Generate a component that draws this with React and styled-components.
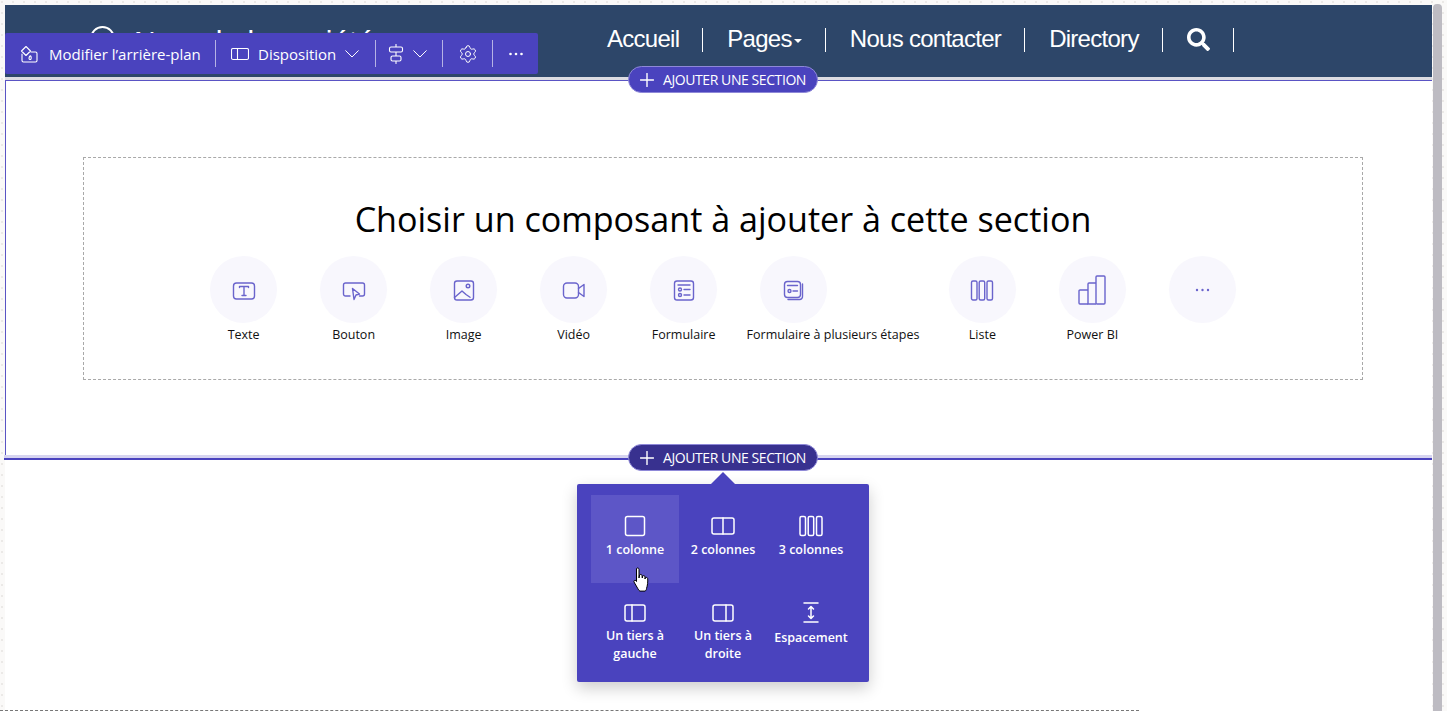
import React from 'react';
import styled, { createGlobalStyle } from 'styled-components';
import { FaSearch } from 'react-icons/fa';
import { Settings } from 'lucide-react';

const UI_FONT = '"Open Sans", "Noto Sans", "Liberation Sans", sans-serif';

const GlobalStyle = createGlobalStyle`
  html, body { margin: 0; padding: 0; height: 711px; overflow: hidden; background: #faf9f8; }
  * { box-sizing: border-box; }
`;

const Page = styled.div`
  display: flex;
  height: 711px;
  padding: 5px 0 0 5px;
  font-family: ${UI_FONT};
  background-color: #faf9f8;
  background-image: radial-gradient(circle at 2px 2px, #ebe9e7 1px, transparent 1.5px);
  background-size: 11px 11px;
`;

const Frame = styled.div`
  position: relative;
  width: 1427px;
  display: flex;
  flex-direction: column;
  background: #fff;
`;

const Scrollbar = styled.div`
  width: 9px;
  margin: -1px 0 0 1px;
  background: #bdbbc2;
  border-radius: 4px 4px 0 0;
`;

/* site header */
const Header = styled.header`
  height: 72px;
  background: #2d4669;
  display: flex;
  align-items: flex-start;
  padding-left: 85px;
  overflow: hidden;
`;

const Logo = styled.div`
  width: 517px;
  display: flex;
  align-items: flex-start;
  gap: 19px;
  padding-top: 20px;
  color: #fff;
  font: 30px "Liberation Sans", Arial, sans-serif;
  line-height: 34px;
  white-space: nowrap;
`;

const LogoMark = styled.span`
  flex: none;
  width: 25px;
  height: 25px;
  margin-top: 1px;
  border: 2px solid #fff;
  border-radius: 50%;
`;

const Nav = styled.nav`
  display: flex;
  align-items: center;
  height: 24px;
  margin-top: 23px;
`;

const NavItem = styled.a`
  display: flex;
  align-items: center;
  height: 24px;
  padding: 0 23px 2px 24px;
  border-right: 1px solid #fff;
  color: #fff;
  font: 24px "Liberation Sans", Arial, sans-serif;
  letter-spacing: -0.72px;
  white-space: nowrap;
  &:first-child { padding-left: 0; }
`;

const Caret = styled.span`
  width: 0;
  height: 0;
  margin: 3px 0 0 2px;
  border: 4px solid transparent;
  border-top-color: #fff;
  border-bottom: 0;
`;

/* section editing bar */
const Toolbar = styled.div`
  position: absolute;
  left: 0;
  top: 28px;
  width: 533px;
  height: 41px;
  display: flex;
  align-items: center;
  background: #4a43be;
  color: #fff;
  border-radius: 2px;
  font-size: 15px;
`;

const ToolGroup = styled.div`
  display: flex;
  align-items: center;
  height: 27px;
  width: ${p => p.$w}px;
  padding-left: ${p => p.$pl}px;
  gap: ${p => p.$gap || 0}px;
  border-right: ${p => (p.$last ? '0' : '1px solid rgba(255,255,255,.6)')};
  white-space: nowrap;
`;

const Line = styled.div`
  flex: none;
  height: ${p => p.$h}px;
  margin-left: ${p => p.$ml || 0}px;
  background: ${p => p.$bg};
`;

const Pill = styled.button`
  position: absolute;
  left: 623px;
  top: ${p => p.$top}px;
  width: 190px;
  height: 27px;
  display: flex;
  align-items: center;
  justify-content: center;
  gap: 9px;
  padding: 0;
  border: 1px solid #8e88d8;
  border-radius: 14px;
  background: ${p => (p.$active ? '#38318f' : '#4a43be')};
  color: #fff;
  font-family: ${UI_FONT};
  font-size: 14px;
  letter-spacing: -0.42px;
  z-index: 3;
`;

const Section = styled.section`
  flex: none;
  height: 374px;
  padding: 76px 69px 75px 77px;
  border-left: 1px solid #5a54c4;
`;

const Placeholder = styled.div`
  height: 223px;
  border: 1px dashed #a9a9a9;
  display: flex;
  flex-direction: column;
  align-items: center;
  padding-top: 38px;
`;

const Title = styled.h2`
  margin: 0;
  height: 46px;
  color: #000;
  font-size: 34.1px;
  line-height: 46px;
  font-weight: 400;
  white-space: nowrap;
`;

const Components = styled.div`
  display: flex;
  justify-content: center;
  margin-top: 14px;
`;

const Component = styled.div`
  min-width: 110px;
  padding: 0 8px;
  display: flex;
  flex-direction: column;
  align-items: flex-start;
`;

const CircleSlot = styled.div`
  width: 94px;
  display: flex;
  justify-content: center;
`;

const Circle = styled.div`
  width: 67px;
  height: 67px;
  border-radius: 50%;
  background: #f8f7fd;
  display: flex;
  align-items: center;
  justify-content: center;
  color: #6a64cc;
`;

const CompLabel = styled.div`
  min-width: 94px;
  margin-top: 3px;
  text-align: center;
  font-size: 12.5px;
  line-height: 18px;
  color: #111;
  white-space: nowrap;
`;

/* section layout popup */
const Popover = styled.div`
  position: absolute;
  left: 572px;
  top: 479px;
  width: 292px;
  height: 198px;
  padding: 11px 14px;
  display: grid;
  grid-template-columns: repeat(3, 88px);
  grid-template-rows: repeat(2, 88px);
  background: #4a43be;
  border-radius: 2px;
  box-shadow: 0 6px 16px rgba(0,0,0,.2);
  z-index: 2;
  &::before {
    content: '';
    position: absolute;
    left: 134px;
    top: -12px;
    border: 12px solid transparent;
    border-top: 0;
    border-bottom-color: #4a43be;
  }
`;

const LayoutOption = styled.div`
  display: flex;
  flex-direction: column;
  align-items: center;
  padding-top: ${p => p.$pt}px;
  background: ${p => (p.$hover ? '#5d56c7' : 'transparent')};
  color: #fff;
  font-size: 12.5px;
  font-weight: 600;
  line-height: 18px;
  text-align: center;
`;

const OptionLabel = styled.div`
  margin-top: ${p => p.$mt}px;
  white-space: pre-line;
`;

const Cursor = styled.svg`
  position: absolute;
  left: 628px;
  top: 562px;
  z-index: 4;
`;

const BottomEdge = styled.div`
  position: absolute;
  left: -5px;
  top: 705px;
  width: 1139px;
  border-top: 1px dashed #777;
`;

const Ic = ({ w = 24, h = 24, sw = 1.6, children }) => (
  <svg width={w} height={h} viewBox={`0 0 ${w} ${h}`} fill="none" stroke="currentColor" strokeWidth={sw} strokeLinecap="round" strokeLinejoin="round">
    {children}
  </svg>
);

const Chevron = () => (
  <Ic w={14} h={8} sw={1}><path d="M.7.7 7 7l6.300-6.300" /></Ic>
);

const PlusIc = () => (
  <Ic w={14} h={14} sw={1.4}><path d="M7 .5v13M.5 7h13" /></Ic>
);

const Bucket = () => (
  <Ic w={18} h={18} sw={1.1}>
    <path d="M6 1.5 10.500 6 6 10.500 1.500 6Z" />
    <path d="M11 7h4.500a1.500 1.500 0 0 1 1.500 1.500v7a1.500 1.500 0 0 1-1.500 1.500h-12A1.500 1.500 0 0 1 2 15.500V9" />
    <path d="M10 11c1-1 1.500 2 1 3s-2 .5-2-.5 .5-2 1-2.500Z" />
  </Ic>
);

const LayoutIc = () => (
  <Ic w={18} h={14} sw={1.1}><rect x=".5" y="1.5" width="17" height="11" rx="1.5" /><path d="M6.500 1.500v11" /></Ic>
);

const AlignIc = () => (
  <Ic w={16} h={20} sw={1.1}>
    <path d="M8 .5v19" />
    <rect x="1.5" y="3" width="13" height="5" rx="1.5" fill="#4a43be" />
    <rect x="3" y="12" width="10" height="5" rx="1.5" fill="#4a43be" />
  </Ic>
);

const Dots = ({ w = 16, r = 1.3 }) => (
  <svg width={w} height="4" viewBox={`0 0 ${w} 4`} fill="currentColor">
    <circle cx={w / 2 - 5.5} cy="2" r={r} /><circle cx={w / 2} cy="2" r={r} /><circle cx={w / 2 + 5.5} cy="2" r={r} />
  </svg>
);

const compIcons = {
  text: (
    <Ic sw={1.4}>
      <rect x="1.500" y="5" width="21" height="16" rx="3" />
      <path d="M7.500 9.500v-1h9v1M12 8.500v9M10 17.500h4" />
    </Ic>
  ),
  button: (
    <Ic sw={1.4}>
      <path d="M8 18H3.500A2 2 0 0 1 1.500 16V7a2 2 0 0 1 2-2h17a2 2 0 0 1 2 2v9a2 2 0 0 1-2 2h-3" />
      <path d="M10.500 10.500 17.500 16l-3.500 1-2 4.500Z" />
    </Ic>
  ),
  image: (
    <Ic sw={1.4}>
      <rect x="2.500" y="3" width="19" height="19" rx="2.500" />
      <circle cx="16" cy="8" r="1.800" />
      <path d="M2.500 19.500 10 13l4 3.500 4 2.800" />
    </Ic>
  ),
  video: (
    <Ic sw={1.4}>
      <rect x="1.500" y="5" width="15" height="15" rx="3.500" />
      <path d="M16.500 10.500 22 6.500v12l-5.500-4" />
    </Ic>
  ),
  form: (
    <Ic sw={1.4}>
      <rect x="2.500" y="3" width="19" height="19" rx="2.500" />
      <path d="M6 7h12M12 11.500h6M12 17h6" />
      <circle cx="8" cy="11.500" r="1.500" /><circle cx="8" cy="17" r="1.500" />
    </Ic>
  ),
  multi: (
    <Ic sw={1.4}>
      <rect x="2.500" y="3.500" width="16" height="16" rx="3" />
      <path d="M5.500 7.500h10M11 13h4.500" />
      <circle cx="7.500" cy="13" r="1.500" />
      <path d="M20.500 6v12a3 3 0 0 1-3 3.500H6" />
    </Ic>
  ),
  list: (
    <Ic sw={1.4}>
      <rect x="1.500" y="3" width="5.500" height="19" rx="1.500" />
      <rect x="9.200" y="3" width="5.500" height="19" rx="1.500" />
      <rect x="17" y="3" width="5.500" height="19" rx="1.500" />
    </Ic>
  ),
  powerbi: (
    <svg width="28" height="30" viewBox="0 0 28 30" fill="none" stroke="currentColor" strokeWidth="1.4" strokeLinejoin="round">
      <rect x="18" y="1" width="9" height="28" rx="1" />
      <path d="M18 8h-7a1 1 0 0 0-1 1v20h8" />
      <path d="M10 15H2a1 1 0 0 0-1 1v12a1 1 0 0 0 1 1h8" />
    </svg>
  ),
  more: <Dots w={15} r={1.2} />,
};

const components = [
  ['Texte', 'text'],
  ['Bouton', 'button'],
  ['Image', 'image'],
  ['Vidéo', 'video'],
  ['Formulaire', 'form'],
  ['Formulaire à plusieurs étapes', 'multi'],
  ['Liste', 'list'],
  ['Power BI', 'powerbi'],
  ['', 'more'],
];

const layouts = [
  {
    label: '1 colonne', pt: 20, mt: 4, hover: true,
    icon: <Ic w={22} h={22} sw={1.5}><rect x="1.500" y="1.500" width="19" height="19" rx="2" /></Ic>,
  },
  {
    label: '2 colonnes', pt: 20, mt: 4,
    icon: <Ic w={24} h={22} sw={1.5}><rect x="1" y="3" width="22" height="16" rx="2" /><path d="M12 3v16" /></Ic>,
  },
  {
    label: '3 colonnes', pt: 20, mt: 4,
    icon: <Ic w={24} h={22} sw={1.5}><rect x="1" y="1.500" width="5.500" height="19" rx="1.500" /><rect x="9.200" y="1.500" width="5.500" height="19" rx="1.500" /><rect x="17.500" y="1.500" width="5.500" height="19" rx="1.500" /></Ic>,
  },
  {
    label: 'Un tiers à\ngauche', pt: 20, mt: 4,
    icon: <Ic w={22} h={20} sw={1.5}><rect x="1" y="2" width="20" height="16" rx="2" /><path d="M8 2v16" /></Ic>,
  },
  {
    label: 'Un tiers à\ndroite', pt: 20, mt: 4,
    icon: <Ic w={22} h={20} sw={1.5}><rect x="1" y="2" width="20" height="16" rx="2" /><path d="M14 2v16" /></Ic>,
  },
  {
    label: 'Espacement', pt: 19, mt: 6,
    icon: <Ic w={16} h={21} sw={1.5}><path d="M1 1h14M1 20h14M8 5v11M5.500 7 8 4.500 10.500 7M5.500 14 8 16.500 10.500 14" /></Ic>,
  },
];

export default function App() {
  return (
    <Page>
      <GlobalStyle />
      <Frame>
        <Header>
          <Logo><LogoMark />Nom de la société</Logo>
          <Nav>
            <NavItem>Accueil</NavItem>
            <NavItem>Pages<Caret /></NavItem>
            <NavItem>Nous contacter</NavItem>
            <NavItem>Directory</NavItem>
            <NavItem><FaSearch size={23} /></NavItem>
          </Nav>
        </Header>
        <Toolbar>
          <ToolGroup $w={211} $pl={15} $gap={11}><Bucket />Modifier l’arrière-plan</ToolGroup>
          <ToolGroup $w={160} $pl={15} $gap={9}><LayoutIc />Disposition<Chevron /></ToolGroup>
          <ToolGroup $w={67} $pl={12} $gap={9}><AlignIc /><Chevron /></ToolGroup>
          <ToolGroup $w={50} $pl={15}><Settings size={20} strokeWidth={1.2} /></ToolGroup>
          <ToolGroup $w={45} $pl={15} $last><Dots /></ToolGroup>
        </Toolbar>
        <Line $h={3} $bg="#dcdce2" />
        <Line $h={1} $bg="#5a54c4" />
        <Pill $top={61}><PlusIc />AJOUTER UNE SECTION</Pill>
        <Section>
          <Placeholder>
            <Title>Choisir un composant à ajouter à cette section</Title>
            <Components>
              {components.map(([label, icon]) => (
                <Component key={icon}>
                  <CircleSlot><Circle>{compIcons[icon]}</Circle></CircleSlot>
                  <CompLabel>{label}</CompLabel>
                </Component>
              ))}
            </Components>
          </Placeholder>
        </Section>
        <Line $h={3} $ml={-1} $bg="#d6d4f0" />
        <Line $h={2} $ml={-1} $bg="#4a43be" />
        <Pill $top={439} $active><PlusIc />AJOUTER UNE SECTION</Pill>
        <Popover>
          {layouts.map(o => (
            <LayoutOption key={o.label} $pt={o.pt} $hover={o.hover}>
              {o.icon}
              <OptionLabel $mt={o.mt}>{o.label}</OptionLabel>
            </LayoutOption>
          ))}
        </Popover>
        <Cursor width="18" height="26" viewBox="0 0 18 26" fill="#fff" stroke="#000" strokeWidth="1" strokeLinejoin="round">
          <path d="M3.500 1.500c1-1 2.500-.5 2.500 1V11l.5-3c1-1 2.500-.5 2.500.5L9.300 11l.2-1.800c1-1 2.500-.5 2.500.7V12l.3-1.200c1-.8 2.200-.3 2.400.8.3 3-.2 7-1.200 10 0 1-.5 2-1.500 2.500H7c-1-.3-1.500-1-2-2.200L1 15c-.6-1.200.8-2.400 2-1.300l.5.800Z" />
        </Cursor>
        <BottomEdge />
      </Frame>
      <Scrollbar />
    </Page>
  );
}
